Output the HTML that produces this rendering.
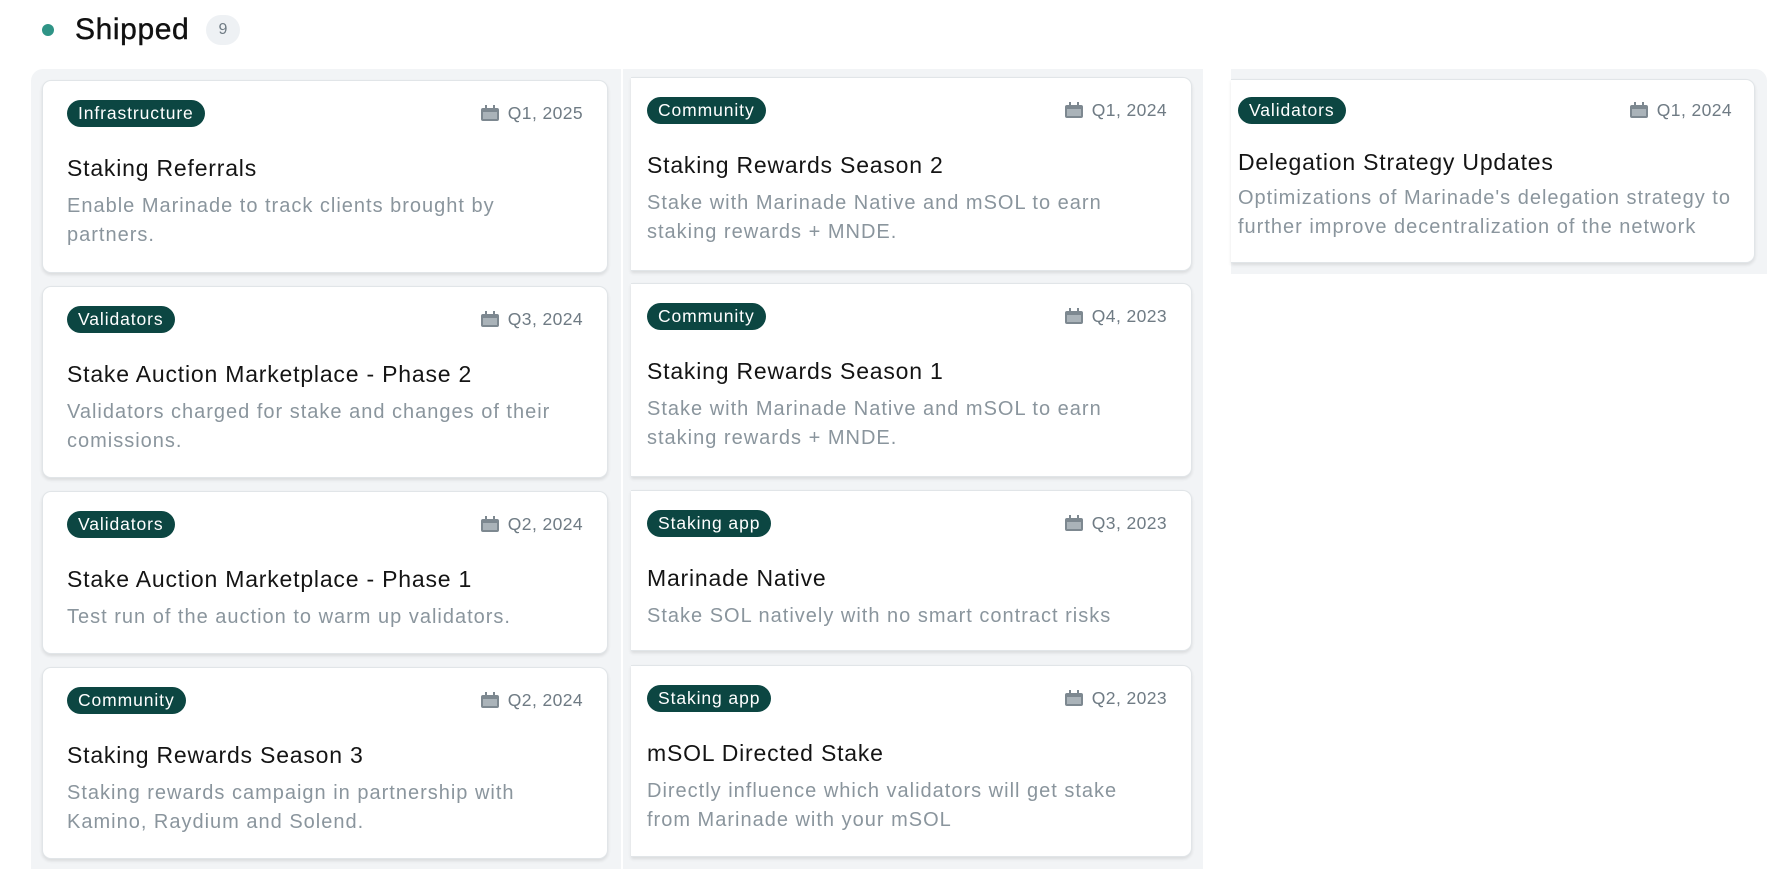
<!DOCTYPE html>
<html><head><meta charset="utf-8"><style>
*{margin:0;padding:0;box-sizing:border-box}
body{width:1792px;height:884px;background:#fff;font-family:"Liberation Sans",sans-serif;position:relative;overflow:hidden}
.col{position:absolute;background:#f2f4f6;overflow:hidden}
.card{position:absolute;background:#fff;border:1px solid #e1e5e8;border-radius:9px;box-shadow:0 2px 3px rgba(0,0,0,.10)}
.card.cl{border-left:none;border-radius:0 9px 9px 0}
.tag{position:absolute;top:19px;height:27px;line-height:27px;padding:0 11px;border-radius:14px;background:#0c4642;color:#fff;font-size:17.5px;letter-spacing:0.9px;white-space:nowrap}
.date{position:absolute;top:21px;right:24px;font-size:17.5px;letter-spacing:0.4px;color:#6f7b84;line-height:22px;white-space:nowrap;display:flex;align-items:center;gap:9px}
.title{position:absolute;top:73px;font-size:23px;letter-spacing:0.8px;line-height:28px;color:#141414;white-space:nowrap}
.desc{position:absolute;top:111px;font-size:20px;letter-spacing:1px;line-height:29px;color:#8a959d;white-space:nowrap}
</style></head><body>
<div style="position:absolute;left:42px;top:24px;width:12px;height:12px;border-radius:50%;background:#2f9486"></div>
<div style="position:absolute;left:75px;top:12px;font-size:30px;letter-spacing:0.6px;line-height:36px;color:#111;-webkit-text-stroke:0.4px #111">Shipped</div>
<div style="position:absolute;left:206px;top:15px;width:34px;height:30px;border-radius:15px;background:#eef1f4;color:#6f7b84;font-size:16px;line-height:30px;text-align:center">9</div>

<div class="col" style="left:31px;top:69px;width:590px;height:800px;border-radius:12px 0 0 0"></div>
<div class="col" style="left:623px;top:69px;width:580px;height:800px"></div>
<div class="col" style="left:1231px;top:69px;width:536px;height:205px;border-radius:0 12px 0 0"></div>

<svg width="0" height="0" style="position:absolute"><defs><symbol id="cal" viewBox="0 0 18 16"><rect x="0" y="3" width="18" height="13" rx="2" fill="#7d8890"/><rect x="2" y="7" width="14" height="7" fill="#aab3b9"/><rect x="4" y="0" width="2" height="4" fill="#7d8890"/><rect x="12" y="0" width="2" height="4" fill="#7d8890"/></symbol></defs></svg>

<div class="card" style="left:42px;top:80px;width:566px;height:193px">
<div class="tag" style="left:24px">Infrastructure</div>
<div class="date"><svg width="18" height="16"><use href="#cal"/></svg>Q1, 2025</div>
<div class="title" style="left:24px">Staking Referrals</div>
<div class="desc" style="left:24px">Enable Marinade to track clients brought by<br>partners.</div></div>

<div class="card" style="left:42px;top:286px;width:566px;height:192px">
<div class="tag" style="left:24px">Validators</div>
<div class="date"><svg width="18" height="16"><use href="#cal"/></svg>Q3, 2024</div>
<div class="title" style="left:24px">Stake Auction Marketplace - Phase 2</div>
<div class="desc" style="left:24px">Validators charged for stake and changes of their<br>comissions.</div></div>

<div class="card" style="left:42px;top:491px;width:566px;height:163px">
<div class="tag" style="left:24px">Validators</div>
<div class="date"><svg width="18" height="16"><use href="#cal"/></svg>Q2, 2024</div>
<div class="title" style="left:24px">Stake Auction Marketplace - Phase 1</div>
<div class="desc" style="left:24px">Test run of the auction to warm up validators.</div></div>

<div class="card" style="left:42px;top:667px;width:566px;height:192px">
<div class="tag" style="left:24px">Community</div>
<div class="date"><svg width="18" height="16"><use href="#cal"/></svg>Q2, 2024</div>
<div class="title" style="left:24px">Staking Rewards Season 3</div>
<div class="desc" style="left:24px">Staking rewards campaign in partnership with<br>Kamino, Raydium and Solend.</div></div>

<div class="card cl" style="left:631px;top:77px;width:561px;height:194px">
<div class="tag" style="left:16px">Community</div>
<div class="date"><svg width="18" height="16"><use href="#cal"/></svg>Q1, 2024</div>
<div class="title" style="left:16px">Staking Rewards Season 2</div>
<div class="desc" style="left:16px">Stake with Marinade Native and mSOL to earn<br>staking rewards + MNDE.</div></div>

<div class="card cl" style="left:631px;top:283px;width:561px;height:194px">
<div class="tag" style="left:16px">Community</div>
<div class="date"><svg width="18" height="16"><use href="#cal"/></svg>Q4, 2023</div>
<div class="title" style="left:16px">Staking Rewards Season 1</div>
<div class="desc" style="left:16px">Stake with Marinade Native and mSOL to earn<br>staking rewards + MNDE.</div></div>

<div class="card cl" style="left:631px;top:490px;width:561px;height:161px">
<div class="tag" style="left:16px">Staking app</div>
<div class="date"><svg width="18" height="16"><use href="#cal"/></svg>Q3, 2023</div>
<div class="title" style="left:16px">Marinade Native</div>
<div class="desc" style="left:16px">Stake SOL natively with no smart contract risks</div></div>

<div class="card cl" style="left:631px;top:665px;width:561px;height:192px">
<div class="tag" style="left:16px">Staking app</div>
<div class="date"><svg width="18" height="16"><use href="#cal"/></svg>Q2, 2023</div>
<div class="title" style="left:16px">mSOL Directed Stake</div>
<div class="desc" style="left:16px">Directly influence which validators will get stake<br>from Marinade with your mSOL</div></div>

<div class="card cl" style="left:1231px;top:79px;width:524px;height:184px">
<div class="tag" style="left:7px;top:17px">Validators</div>
<div class="date" style="right:22px;top:19px"><svg width="18" height="16"><use href="#cal"/></svg>Q1, 2024</div>
<div class="title" style="left:7px;top:68px">Delegation Strategy Updates</div>
<div class="desc" style="left:7px;top:104px">Optimizations of Marinade's delegation strategy to<br>further improve decentralization of the network</div></div>
</body></html>
